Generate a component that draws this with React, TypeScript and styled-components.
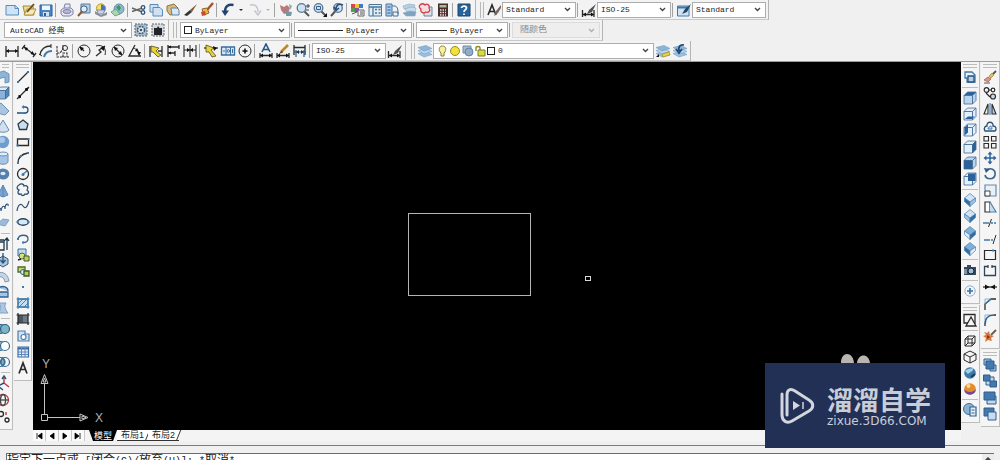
import React from "react";
import type { ReactNode } from "react";
import styled, { createGlobalStyle, css } from "styled-components";

const GlobalStyle = createGlobalStyle`
  *, *::before, *::after { box-sizing: border-box; }
  html, body { margin: 0; padding: 0; background: #f0f0f0; overflow: hidden; }
  body { font-family: "Liberation Mono", "Noto Sans CJK SC", monospace; font-size: 8px; color: #222; }
  button, select { font: inherit; color: inherit; }
`;

/* ---------- palette ---------- */
const ink = "#2b2b2b";
const navy = "#2a5078";
const blue = "#3f78ad";
const sky = "#b9d6ee";
const pale = "#e3effa";

const line = { fill: "none", stroke: ink, strokeWidth: 1.3 };
const thin = { fill: "none", stroke: ink, strokeWidth: 1 };
const navyLine = { fill: "none", stroke: navy, strokeWidth: 1.3 };
const blueLine = { fill: "none", stroke: blue, strokeWidth: 1.3 };

const Cube = ({ top = pale, left = pale, right = pale }: { top?: string; left?: string; right?: string }) => (
  <g stroke="#3d6a94" strokeWidth="0.8" strokeLinejoin="round">
    <path d="M2 5.5 5.5 2H14L10.500 5.500Z" fill={top} />
    <path d="M2 5.500H10.500V14H2Z" fill={left} />
    <path d="M10.500 5.500 14 2V10.500L10.500 14Z" fill={right} />
  </g>
);

const Diamond = ({ a, b, c }: { a: string; b: string; c: string }) => (
  <g stroke="#4a7fae" strokeWidth="0.7" strokeLinejoin="round">
    <path d="M8 1.500 13.500 6 8 10 2.500 6Z" fill={a} />
    <path d="M2.500 6 8 10V14.500L2.500 9.500Z" fill={b} />
    <path d="M13.500 6 8 10V14.500L13.500 9.500Z" fill={c} />
  </g>
);

const Lens = ({ children }: { children?: ReactNode }) => (
  <g>
    <path d="M9.500 9.500 14 14" stroke="#555" strokeWidth="2" />
    <circle cx="6.500" cy="6" r="4.300" fill="#cfe2f2" stroke="#5c7690" strokeWidth="1.300" />
    {children}
  </g>
);

const Layers = () => (
  <g stroke="#6f9cc6" strokeWidth="0.600">
    <path d="M1 10.500 9 8.500 15 11.500 7 14Z" fill="#9cc0df" />
    <path d="M1 7.500 9 5.500 15 8.500 7 11Z" fill="#bcd6ec" />
    <path d="M1 4.500 9 2.500 15 5.500 7 8Z" fill="#8fb4d6" />
  </g>
);

const glyphs: Record<string, ReactNode> = {
  new: <path d="M2 3.500H11L14.500 6.500V13H2Z M11 3.500V6.500H14.500" fill="#cfe3f6" stroke="#5a8cbd" />,
  open: (
    <g>
      <path d="M2 4H12L13 13H4Z" fill="#e8dc9a" stroke="#a9873c" />
      <path d="M3 13 6 7H15L12 13Z" fill="#f3e9b5" stroke="#b08e3f" />
      <path d="M6 10 13 2" stroke="#6b4c22" strokeWidth="1.800" />
    </g>
  ),
  save: (
    <g>
      <path d="M2 3H14V14H2Z" fill="#4a86c6" stroke="#2d5f98" />
      <path d="M4 3.500H12V8H4Z" fill="#eef5fc" />
      <path d="M5 10H11V14H5Z" fill="#cfe0ee" />
      <path d="M6 11H8V14H6Z" fill="#2d5f98" />
    </g>
  ),
  print: (
    <g fill="#e4e6f4" stroke="#7f81a6">
      <path d="M5 6 6 2H11L11 6" />
      <path d="M2 8 5 6H12L14 8V12L11 14H4L2 12Z" />
      <ellipse cx="8" cy="9.500" rx="4" ry="2" fill="#b5b8d8" />
    </g>
  ),
  preview: (
    <g>
      <path d="M5 2H14V11H5Z" fill="#b7d3ec" stroke="#4b7dac" />
      <circle cx="8" cy="7" r="3.200" fill="#dfeefa" stroke="#456" />
      <path d="M6 9.500 2 14" stroke="#8a5a35" strokeWidth="2" />
    </g>
  ),
  publish: (
    <g>
      <path d="M2 9 8 13 14 10 14 13 8 15 2 12Z" fill="#8e8f9a" />
      <circle cx="8" cy="6.500" r="4.600" fill="#f4e16c" stroke="#b99a24" />
      <path d="M8 2.500A4 4 0 0 1 12 8L8 8Z" fill="#4d6fc0" />
      <path d="M4 8H12L10 12H5Z" fill="#c9d3ee" stroke="#6476a6" strokeWidth="0.700" />
    </g>
  ),
  dwf: (
    <g>
      <circle cx="9" cy="7" r="5" fill="#8fb8cf" stroke="#6d90a5" />
      <path d="M6 5 9 3 11 6 9 9Z" fill="#3c9a5e" />
      <path d="M1 10 6 7 10 12 5 14Z" fill="#a9d5b2" stroke="#5d9770" strokeWidth="0.800" />
    </g>
  ),
  cut: (
    <g>
      <path d="M1 6 10 9.500M1 9.500 10 6.500" stroke="#666" strokeWidth="1.400" />
      <circle cx="12" cy="5.500" r="1.800" {...navyLine} />
      <circle cx="12" cy="10.500" r="1.800" {...navyLine} />
    </g>
  ),
  copy: (
    <g fill="#cfe2f4" stroke="#5a8bb9">
      <path d="M2 2.500H10V10H2Z" />
      <path d="M5 5.500H12L14.500 8V14H5Z" />
    </g>
  ),
  paste: (
    <g>
      <path d="M2 4 9 2 13 6 12 12 5 13 2 9Z" fill="#d8bc7a" stroke="#8d7342" />
      <path d="M6 6H12L14 8V13H7Z" fill="#dbe7f4" stroke="#5b84ae" />
    </g>
  ),
  match: (
    <g>
      <path d="M15 2 8 8 10 10Z" fill="#8a5a3c" />
      <path d="M8 8 10 10 5 14 2 13Z" fill="#333" />
    </g>
  ),
  block: (
    <g>
      <path d="M14 1 8 8" stroke="#a5522a" strokeWidth="2.400" />
      <path d="M3 7 8 6 10 11 5 13Z" fill="#e7b94a" stroke="#93652b" />
      <path d="M2 10 6 9 7 13 3 14Z" fill="#c94c2f" />
    </g>
  ),
  undo: (
    <g>
      <path d="M13.500 3C8 2 5 4.500 5 9.500" fill="none" stroke="#22436f" strokeWidth="2.400" />
      <path d="M1.500 8.500H9L5 14Z" fill="#22436f" />
    </g>
  ),
  redo: <path d="M3 3C9 2 11 5 11 10M7.500 8.500 11 13 14 8.500" fill="none" stroke="#c3c8ce" strokeWidth="1.600" />,
  pan: (
    <g>
      <path d="M2 3 6 5 9 3 12 6 10 11 6 12 3 8Z" fill="#b9787a" />
      <path d="M8 9 14 10 13 14 8 14Z" fill="#6d9ba8" />
      <path d="M11 2 14 4 12 8Z" fill="#80a6b9" />
    </g>
  ),
  zoomRt: (
    <Lens>
      <path d="M11 4H15M13 2V6M11 8H14" stroke="#345" />
    </Lens>
  ),
  zoomWin: (
    <Lens>
      <path d="M4.500 4.500H8.500V7.500H4.500Z" fill="none" stroke="#2f6496" />
      <path d="M11 15H15V11Z" fill="#111" />
    </Lens>
  ),
  zoomPrev: (
    <g>
      <circle cx="9" cy="6" r="4.300" fill="#cfe2f2" stroke="#5c7690" strokeWidth="1.300" />
      <path d="M6 9.500 2 14" stroke="#555" strokeWidth="2" />
      <path d="M14 3C10 1 7 3 7 7M5 5 7 8.500 10 6" fill="none" stroke={navy} strokeWidth="1.600" />
    </g>
  ),
  props: (
    <g>
      <path d="M1 2H5V6H1Z" fill="#d9473d" />
      <path d="M5 2H9V6H5Z" fill="#e9c63a" />
      <path d="M1 6H5V10H1Z" fill="#4f9e50" />
      <path d="M5 6H9V10H5Z" fill="#8f4fae" />
      <path d="M9 2H13V6H9Z" fill="#3e78cf" />
      <path d="M8 8H14V14H8Z" fill="#f5f5f5" stroke="#666" />
      <path d="M2 12 7 10M10 10H13M10 12H13" stroke="#555" />
    </g>
  ),
  center: (
    <g>
      <path d="M2 2.500H14.500V14H2Z" fill="#e1edf6" stroke="#4c7796" />
      <path d="M2 5H14.500M6 5V14M8 7.500H10M11.500 7.500H13.500M8 11H10M11.500 11H13.500" stroke="#4b759a" strokeWidth="1.300" />
    </g>
  ),
  palettes: (
    <g>
      <path d="M2 2H8V14H2Z" fill="#a9cae8" stroke="#4577a3" />
      <path d="M3.500 5H6.500M3.500 8H6.500M3.500 11H6.500" stroke="#2e5c86" />
      <path d="M8 4H11C14 5 14 8 14 12M9 10H14V14H9Z" fill="#e9f2fa" stroke="#4a6f92" />
    </g>
  ),
  sheets: (
    <g stroke="#8aaac4" strokeWidth="0.600">
      <path d="M2 4 8 2 14 3 13 6 3 7Z" fill="#b7cfe1" />
      <path d="M4 7 10 5 15 6 14 10 6 10Z" fill="#c9dbe8" />
      <path d="M2 11 9 9 15 10 14 14 5 14Z" fill="#7fa4c2" />
    </g>
  ),
  markup: (
    <g>
      <path d="M6 5H14V14H6Z" fill="#d8dfe9" stroke="#72839c" />
      <path d="M2 3C4 1 6 2 7 3 9 1 12 3 11 6 13 9 10 11 8 10 5 12 2 10 3 7 1 6 1 4 2 3Z" fill="#f6dede" stroke="#cf3e48" strokeWidth="1.300" />
    </g>
  ),
  calc: (
    <g>
      <path d="M3 1.500H13V14.500H3Z" fill="#4b2c2c" />
      <path d="M4.500 3H11.500V5.500H4.500Z" fill="#9fc08d" />
      <path d="M5 8H11M5 10.500H11M5 13H11" stroke="#e9dcdc" strokeWidth="1.300" strokeDasharray="1.500 1" />
    </g>
  ),
  help: (
    <g>
      <path d="M2 2H14V14H2Z" fill="#27629c" stroke="#174671" />
      <path d="M5.500 6C5.500 3.500 10.500 3.500 10.500 6 10.500 8 8 7.500 8 10M8 11.500V13" fill="none" stroke="#fff" strokeWidth="1.700" />
    </g>
  ),
  textStyle: (
    <g>
      <path d="M2 13 6 3 10 13M3.500 9.500H8.500" {...line} strokeWidth="1.600" />
      <path d="M15 3 10 9 8 14 12 11 15 6Z" fill="#76685e" />
    </g>
  ),
  dimStyle: (
    <g>
      <path d="M1.500 8V15M13 8V15M2 12.500H13" {...line} />
      <path d="M2 12.500 5 10.500V14.500ZM13 12.500 10 10.500V14.500Z" fill="#111" />
      <path d="M15 2 8 8 6 12 11 10Z" fill="#54504d" />
    </g>
  ),
  tableStyle: (
    <g>
      <path d="M1.500 4H13V14H1.500Z" fill="#cfe3f6" stroke="#4278a8" />
      <path d="M1.500 5.500H13" stroke="#4278a8" strokeWidth="2" />
      <path d="M15 2 9 7 6 12 11 10Z" fill="#24486c" />
    </g>
  ),
  gear: (
    <g>
      <path d="M2 2H14V14H2Z" fill="#a9bccb" stroke="#4d6478" strokeDasharray="2 1" />
      <circle cx="8" cy="8" r="3.500" fill="#e5ecf1" stroke="#3e5668" strokeWidth="1.500" strokeDasharray="2 0.800" />
      <circle cx="8" cy="8" r="1.300" fill="#3e5668" />
    </g>
  ),
  workspace: (
    <g>
      <path d="M2 2H14V14H2Z" fill="#d5dade" stroke="#5a6670" strokeDasharray="2 1" />
      <path d="M4 6H7L8 4 9.500 6H12V13H4Z" fill="#202427" />
    </g>
  ),
  dLinear: (
    <g>
      <path d="M2 3V14M14 3V14M2 8H14" {...line} />
      <path d="M2 8 5 6V10ZM14 8 11 6V10Z" fill="#111" />
    </g>
  ),
  dAligned: (
    <g>
      <path d="M4 2 1 6M15 10 12 14M3 4 13.500 12" {...line} />
      <path d="M3 4 7 5 5 8ZM13.500 12 9.500 11 11.500 8Z" fill="#111" />
    </g>
  ),
  dArc: (
    <g>
      <path d="M2 12C3 6 7 3 13 3" {...line} />
      <path d="M6 14C7 10 9 8 14 8" {...blueLine} strokeWidth="2" />
      <path d="M13 1V5M1 11 4 13" {...thin} />
    </g>
  ),
  dOrd: (
    <g>
      <path d="M2 3V14H14M2 10H5L8 6V2M8 14V10H12V14" {...line} strokeWidth="1.100" strokeDasharray="2.500 1" />
      <circle cx="10" cy="5" r="2.500" {...thin} />
    </g>
  ),
  dRadius: (
    <g>
      <circle cx="8" cy="8" r="6" {...thin} />
      <path d="M8 8 4 4" {...line} />
      <path d="M3.500 3.500 8 5 5 8Z" fill="#111" />
    </g>
  ),
  dJog: (
    <g>
      <path d="M3 3C9 1 14 5 12 12" {...thin} />
      <path d="M3 13 8 9 6 7 12 3" {...line} />
      <path d="M12 3 11 8 7 5Z" fill="#111" />
    </g>
  ),
  dDia: (
    <g>
      <circle cx="8" cy="8" r="6" {...thin} />
      <path d="M4 4 12 12" {...line} />
      <path d="M4 4 8 5 5 8ZM12 12 8 11 11 8Z" fill="#111" />
    </g>
  ),
  dAng: (
    <g>
      <path d="M14 13H2L8 2" {...line} />
      <path d="M6 5C10 6 12 9 12 12" {...thin} />
      <path d="M10 5 12 9 8 8ZM12 13 10 9 14 9Z" fill="#111" />
    </g>
  ),
  dQuick: (
    <g>
      <path d="M2 3V14M14 3V14M10 8H14" {...line} />
      <path d="M3 3 11 5 8 8 13 12 10 14 5 9 3 9Z" fill="#e5d338" stroke="#544c18" strokeWidth="0.800" />
    </g>
  ),
  dBase: (
    <g>
      <path d="M3 2V14M3 4H14M14 2V6M3 10H10M10 8V13" {...line} />
      <path d="M3 4 6 2.500V5.500ZM3 10 6 8.500V11.500Z" fill="#111" />
    </g>
  ),
  dCont: (
    <g>
      <path d="M2 2V14M8 2V14M14 2V14M2 7H14" {...line} strokeWidth="1.100" />
      <path d="M8 7 5 5V9ZM8 7 11 5V9Z" fill="#111" />
    </g>
  ),
  dSpace: (
    <g>
      <path d="M1 5H15" {...line} />
      <path d="M3 2 11 5 8 7 13 13 9 14 6 9 3 9Z" fill="#e5d338" stroke="#544c18" strokeWidth="0.800" />
      <path d="M10 3 14 5 11 8Z" fill="#111" />
    </g>
  ),
  dTol: (
    <g>
      <path d="M1.500 4H14.500V12H1.500Z" fill="#dcebf8" stroke="#396f9f" strokeWidth="1.300" />
      <path d="M6 4V12M10.500 4V12M12.500 6V10M3 8H5" stroke="#396f9f" />
      <circle cx="8.300" cy="8" r="1.300" fill="none" stroke="#396f9f" />
    </g>
  ),
  dCenter: (
    <g>
      <circle cx="8" cy="8" r="6" {...thin} />
      <path d="M8 5.500V10.500M5.500 8H10.500" stroke="#111" strokeWidth="1.600" />
    </g>
  ),
  dEdit: (
    <g>
      <path d="M4 9 8 1 12 9M5.500 6.500H10.500" fill="none" stroke="#24588a" strokeWidth="1.600" />
      <path d="M2 10V15M14 10V15M2 12.500H14" {...line} />
      <path d="M2 12.500 5 10.500V14.500ZM14 12.500 11 10.500V14.500Z" fill="#111" />
    </g>
  ),
  dText: (
    <g>
      <path d="M13 2 6 9" stroke="#c1862c" strokeWidth="2.600" />
      <path d="M6.500 7.500 4 11 8 9.500Z" fill="#6b3b20" />
      <path d="M2 10V15M14 10V15M2 12.500H14" {...line} />
      <path d="M2 12.500 5 10.500V14.500ZM14 12.500 11 10.500V14.500Z" fill="#111" />
    </g>
  ),
  dUpdate: (
    <g>
      <path d="M2 2V12M13 2V12M2 4.500H13" {...line} />
      <path d="M2 9H14M4 7V14M12 7V14" fill="none" stroke="#2e5a84" strokeWidth="1.200" />
      <path d="M4 9 7 7V11ZM12 9 9 7V11Z" fill="#1d3b59" />
    </g>
  ),
  layers: <Layers />,
  layerCur: (
    <g>
      <Layers />
      <path d="M7 11 14 9 15 12 8 14Z" fill="#e6d341" stroke="#9a8c22" strokeWidth="0.700" />
      <path d="M1 14 4 11V14Z" fill="#111" />
    </g>
  ),
  layerPrev: (
    <g>
      <Layers />
      <path d="M12 2C8 1 6 4 7 8M4 6 7 10 10 6" fill="none" stroke="#1d4672" strokeWidth="1.700" />
    </g>
  ),
  /* solids */
  polysolid: <path d="M2 4 9 2 14 5V13L10 14V8L3 10Z" fill="#8fb4d8" stroke="#6b93ba" />,
  box: <Cube top="#dcebf8" left="#8bb2d8" right="#5585b5" />,
  wedge: <path d="M2 5 6 2 14 10 10 14 2 12Z" fill="#a8c6e2" stroke="#7192b0" />,
  cone: <path d="M8 2 14 12C12 15 4 15 2 12Z" fill="#cfdff0" stroke="#6d8cab" />,
  sphere: (
    <g>
      <circle cx="8" cy="8" r="6.200" fill="#6f9dd0" />
      <circle cx="7" cy="6" r="3" fill="#a9c8ea" />
    </g>
  ),
  cylinder: (
    <g stroke="#6c90b4">
      <path d="M3 4V12C4 15 12 15 13 12V4" fill="#a6c5e4" />
      <ellipse cx="8" cy="4" rx="5" ry="2" fill="#e0edf9" />
    </g>
  ),
  torus: (
    <g>
      <ellipse cx="8" cy="8" rx="6.300" ry="5.500" fill="#5580ae" />
      <ellipse cx="8" cy="7.500" rx="2.600" ry="1.700" fill="#dce9f5" />
    </g>
  ),
  pyramid: <path d="M8 2 13 12 8 14 3 12Z M8 2V14" fill="#7ba4d2" stroke="#5c86b5" />,
  helix: <path d="M2 13C3 8 6 8 6 12 7 6 10 6 10 10 10 4 14 4 13 7" {...navyLine} strokeWidth="1.100" />,
  planar: <path d="M2 9 8 4 14 5 10 11Z" fill="#9bbbdc" stroke="#7fa0c3" />,
  extrude: <path d="M2 6H9V14H2M12 14V3M9 5 12 2 14 5M4 4H9" {...line} stroke="#20344a" />,
  presspull: (
    <g>
      <path d="M3 7 8 4 13 7V12L8 15 3 12Z" fill="#aac4e0" stroke="#37597c" />
      <path d="M8 1V11M5.500 8 8 11 10.500 8" {...navyLine} />
    </g>
  ),
  sweep: <path d="M2 5C8 3 13 6 14 13L10 14C9 9 6 8 2 9Z" fill="#c5d5e8" stroke="#8099b5" />,
  revolve: <path d="M3 4C8 1 13 3 13 7M2 8H13V13H5Z" fill="#a7c6e4" stroke="#336291" strokeWidth="1.300" />,
  loft: <path d="M4 3H11C9 6 10 9 13 13H3C7 10 6 7 4 3Z" fill="#adc7e3" stroke="#7f9fc1" />,
  union: (
    <g fill="#7fb3c9" stroke="#2c6080" strokeWidth="1.200">
      <circle cx="5.500" cy="8" r="4.500" />
      <circle cx="10" cy="8" r="4.500" />
    </g>
  ),
  subtract: (
    <g stroke="#3b6d93" strokeWidth="1.200">
      <circle cx="5.500" cy="8" r="4.500" fill="#8fb6d3" />
      <circle cx="10" cy="8" r="4.500" fill="#fff" />
    </g>
  ),
  intersect: (
    <g fill="none" stroke="#3b6d93" strokeWidth="1.200">
      <path d="M7.700 4C5.500 6.500 5.500 9.500 7.700 12 10 9.500 10 6.500 7.700 4Z" fill="#7fb0cc" />
      <circle cx="5.500" cy="8" r="4.500" />
      <circle cx="10" cy="8" r="4.500" />
    </g>
  ),
  move3d: (
    <g>
      <path d="M9 2V8L14 12" fill="none" stroke="#b5393c" strokeWidth="1.400" />
      <path d="M9 8 3 11 8 15M7 4 9 1 11 4" fill="none" stroke="#2d4f77" strokeWidth="1.400" />
    </g>
  ),
  rotate3d: (
    <g fill="none" strokeWidth="1.300">
      <circle cx="8" cy="8" r="5.500" stroke="#b5393c" />
      <ellipse cx="8" cy="8" rx="2.500" ry="5.500" stroke="#444" />
      <path d="M2.500 8H13.500" stroke="#444" />
    </g>
  ),
  align3d: (
    <g {...line}>
      <circle cx="6" cy="5" r="2.500" />
      <circle cx="12" cy="11" r="2" />
      <path d="M11 3V6M3 11V14" stroke="#a33" />
    </g>
  ),
  /* draw */
  line: (
    <g>
      <path d="M3 13 13 3" {...line} />
      <path d="M2 12H4V14H2ZM12 2H14V4H12Z" fill={blue} />
    </g>
  ),
  xline: (
    <g>
      <path d="M2 14 14 2" {...line} />
      <path d="M4 10 6 12 4 13ZM10 4 12 6 13 3Z" fill="#111" stroke="#111" />
    </g>
  ),
  pline: (
    <g>
      <path d="M3 12H10C14 12 14 6 10 6H8" {...navyLine} />
      <path d="M2 11H4V13H2ZM9 11H11V13H9ZM9 4 6.500 6 9 8Z" fill={blue} />
    </g>
  ),
  polygon: <path d="M8 3 13 7 11.500 12.500H4.500L3 7Z" fill="#cbdff0" stroke="#303a44" strokeWidth="1.300" />,
  rect: (
    <g>
      <path d="M2.500 5H13.500V11.500H2.500Z" {...line} />
      <path d="M1.500 10.500H3.500V12.500H1.500ZM12.500 4H14.500V6H12.500Z" fill={blue} />
    </g>
  ),
  arc: (
    <g>
      <path d="M3 13C3 7 7 4 13 3" {...line} />
      <path d="M2 12H4V14H2ZM5 5H7V7H5ZM12 2H14V4H12Z" fill={blue} />
    </g>
  ),
  circle: (
    <g>
      <circle cx="8" cy="8" r="5.500" {...line} />
      <path d="M8 8 12 5" {...blueLine} />
      <circle cx="8" cy="8.500" r="1.500" fill={blue} />
    </g>
  ),
  cloud: <path d="M4 3C6 1 9 2 9 4 12 3 14 5 12 8 15 10 13 13 10 12 9 14 6 14 6 12 3 13 2 10 4 8 1 7 2 4 4 3Z" {...navyLine} />,
  spline: <path d="M2 13C3 6 6 5 8 8S12 10 14 3" {...line} stroke="#33506e" strokeWidth="1.200" />,
  ellipse: (
    <g>
      <ellipse cx="8" cy="8" rx="5.500" ry="3.200" fill="#d7e8f5" stroke="#27425c" strokeWidth="1.400" />
      <path d="M1.500 7H3.500V9H1.500ZM12.500 7H14.500V9H12.500Z" fill={blue} />
    </g>
  ),
  earc: (
    <g>
      <path d="M3 8C4 3 13 3 13 8 13 11 10 11.500 8 11.500" fill="none" stroke="#3a5f85" strokeWidth="1.300" />
      <path d="M2 7H4V9H2ZM7 10.500H9V12.500H7Z" fill={blue} />
    </g>
  ),
  insert: (
    <g>
      <path d="M3 2H11V9H3Z" fill="#c2dbef" stroke="#3b6f9c" />
      <circle cx="7" cy="9" r="3" fill="#d2e089" stroke="#54702c" />
      <path d="M9 9H14V14H9Z" fill="#b9cf6c" stroke="#43591f" />
      <path d="M3 13 6 12" stroke="#222" strokeWidth="1.500" />
    </g>
  ),
  mkblock: (
    <g>
      <path d="M3 4H10V9H3Z" fill="#c5d87e" stroke="#4e6a2a" strokeWidth="1.300" />
      <circle cx="8" cy="9" r="2.500" fill="#dce8f4" stroke="#366" />
      <path d="M9 8H14V13H9Z" fill="#b5cc62" stroke="#43591f" strokeWidth="1.300" />
    </g>
  ),
  point: <path d="M7 7H9V9H7Z" fill={blue} />,
  hatch: (
    <g>
      <path d="M3 4H13V12H3Z" fill="#c7dff1" stroke="#3e7ba8" strokeWidth="1.300" />
      <path d="M3 9 8 4M4 12 12 4M9 12 13 8M1.500 4H14.500M1.500 12H14.500M3 2V14M13 2V14" stroke="#3e7ba8" strokeWidth="0.900" />
    </g>
  ),
  gradient: (
    <g>
      <path d="M3 4H13V12H3Z" fill="#4c545c" />
      <path d="M8 4H13V12H8Z" fill="#6e7a85" />
      <path d="M1.500 4H14.500M1.500 12H14.500M3 2V14M13 2V14" stroke="#20262c" strokeWidth="1.200" />
    </g>
  ),
  region: (
    <g>
      <path d="M3 3H10V6H14V13H3Z" fill="#cfe1f2" stroke="#4c7eac" strokeWidth="1.200" />
      <circle cx="8.500" cy="9" r="2.500" fill="#fff" stroke="#4c7eac" strokeWidth="1.200" />
    </g>
  ),
  table: (
    <g>
      <path d="M3 3H13.500V13H3Z" fill="#e5effa" stroke="#3d69a4" strokeWidth="1.200" />
      <path d="M3 4.500H13.500" stroke="#3d69a4" strokeWidth="2" />
      <path d="M3 8H13.500M3 10.500H13.500M6.500 4V13M10 4V13" stroke="#5c86bd" />
    </g>
  ),
  mtext: <path d="M4 13.500 8 3 12 13.500M5.500 9.500H10.500" {...line} strokeWidth="1.700" />,
  /* views */
  named: (
    <g>
      <path d="M3 3H10L13 6V13H5V9H3Z" fill="#e9f2fa" stroke={blue} strokeWidth="1.300" />
      <path d="M6 7H12V13H6Z" fill="#b5d0e8" stroke={navy} strokeWidth="1.300" />
    </g>
  ),
  vTop: <Cube top="#2b6299" left={sky} right={sky} />,
  vBottom: (
    <g>
      <Cube top={pale} left={pale} right={pale} />
      <path d="M3 13 6 10.500H13L10 13Z" fill="#2b6299" />
    </g>
  ),
  vLeft: (
    <g>
      <Cube top={pale} left={pale} right={pale} />
      <path d="M2.500 5.500 6 2.500V10.500L2.500 13.500Z" fill="#2b6299" />
    </g>
  ),
  vRight: <Cube top={pale} left={pale} right="#2b6299" />,
  vFront: <Cube top={sky} left="#2b6299" right={sky} />,
  vBack: (
    <g>
      <Cube top={pale} left={pale} right={pale} />
      <path d="M6 2.500H13.500V10H6Z" fill="#2b6299" />
    </g>
  ),
  sw: <Diamond a="#d2e4f4" b="#2f6ca5" c="#9fc2e0" />,
  se: <Diamond a="#d2e4f4" b="#9fc2e0" c="#2f6ca5" />,
  ne: <Diamond a="#7fb0d8" b="#e4eef8" c="#2f6ca5" />,
  nw: <Diamond a="#7fb0d8" b="#2f6ca5" c="#e4eef8" />,
  camera: (
    <g>
      <path d="M2 5H5V3H9V5H14V13H2Z" fill="#37495a" />
      <circle cx="9" cy="9" r="3" fill="#9fc0dd" stroke="#1a242e" />
      <path d="M2 7H5V12H2Z" fill="#7e95a9" />
    </g>
  ),
  orbit: (
    <g>
      <circle cx="8" cy="8" r="5.200" fill="#eff5fa" stroke="#9bb2c6" />
      <path d="M8 5V11M5 8H11" stroke="#366fa5" strokeWidth="1.600" />
    </g>
  ),
  vs2d: (
    <g {...line}>
      <path d="M2 2.500H13V11H2Z" />
      <path d="M4 14 9 5 14 14Z" fill="#f4f4f4" />
    </g>
  ),
  vsWire: <path d="M3 6 6 3H13V10L10 13H3ZM3 6H10V13M10 6 13 3M6 3V10H13M6 10 3 13" {...thin} />,
  vsHidden: <path d="M8 2 14 5V11L8 14 2 11V5ZM2 5 8 8 14 5M8 8V14" {...thin} />,
  vsReal: (
    <g>
      <circle cx="8" cy="8" r="5.800" fill="#3d7aa8" />
      <path d="M3 6C6 3 9 4 11 3 12 6 8 7 6 9Z" fill="#a6d0e4" />
      <path d="M9 12 13 9" stroke="#1c3e5c" strokeWidth="2" />
    </g>
  ),
  vsConcept: (
    <g>
      <circle cx="8" cy="8" r="5.800" fill="#e38b2d" />
      <path d="M2.200 8C4 12 12 12 13.800 8 14 15.500 2 15.500 2.200 8Z" fill="#6a4aa5" />
      <circle cx="6.500" cy="5" r="2" fill="#ffd684" />
    </g>
  ),
  vsManage: (
    <g>
      <circle cx="7" cy="7" r="5.500" fill="#8ab3d3" stroke="#3f6f98" />
      <path d="M8 5H14V14H8Z" fill="#e4eff8" stroke="#2e628f" strokeWidth="1.200" />
      <path d="M9.500 8H12.500M9.500 11H12.500" stroke="#2e628f" />
    </g>
  ),
  /* modify */
  erase: (
    <g>
      <path d="M14 2 9 7" stroke="#555" strokeWidth="1.800" />
      <path d="M10 4 7 7 9 9 12 6Z" fill="#e0c24d" stroke="#8f7d2e" strokeWidth="0.600" />
      <path d="M6 8 9 10 6 13 2 11Z" fill="#dd958b" stroke="#9b5048" strokeWidth="0.700" />
      <path d="M2 14H8" stroke="#555" />
    </g>
  ),
  mcopy: (
    <g {...line} strokeWidth="1.200">
      <circle cx="4.500" cy="5" r="2.300" />
      <circle cx="11" cy="5" r="1.800" />
      <circle cx="11" cy="11.500" r="2.500" fill="#c5daed" />
      <path d="M4 8 8 12M7 5H9" />
    </g>
  ),
  mirror: (
    <g {...line} strokeWidth="1.100">
      <path d="M6 3V13H2Z" />
      <path d="M10 3V13H14Z" fill="#b3cfe8" />
      <path d="M8 2V14" stroke={blue} />
    </g>
  ),
  offset: (
    <g>
      <path d="M3 13C1 9 4 8 5 8 4 3 12 3 11 8 14 8 15 11 13 13Z" {...navyLine} />
      <path d="M6 11C6 9 7 9 8 9 8 7 10 8 10 11Z" fill="#cfe1f2" stroke={blue} />
    </g>
  ),
  array: <path d="M2 2.500H6.500V7H2ZM9.500 2.500H14V7H9.500ZM2 9.500H6.500V14H2ZM9.500 9.500H14V14H9.500Z" {...line} strokeWidth="1.100" />,
  move: (
    <g>
      <path d="M8 3V13M3 8H13" stroke="#2e6599" strokeWidth="1.500" />
      <path d="M8 1.500 10.500 4.500H5.500ZM8 14.500 10.500 11.500H5.500ZM1.500 8 4.500 5.500V10.500ZM14.500 8 11.500 5.500V10.500Z" fill="#2e6599" />
    </g>
  ),
  rotate: (
    <g>
      <path d="M5 4C9 1 14 4 13 9 12 14 4 14 3 9" fill="none" stroke="#3f658b" strokeWidth="1.600" />
      <path d="M2 2 8 3 4 7Z" fill="#35587c" />
    </g>
  ),
  scale: (
    <g>
      <path d="M3 3H14V14H3Z" fill="#e8f1f8" stroke="#648cae" strokeWidth="1.200" />
      <path d="M3 9H8V14H3Z" fill="#fff" stroke="#444" />
    </g>
  ),
  stretch: (
    <g>
      <path d="M3 3H8V13H3Z" fill="#fff" stroke="#333" strokeWidth="1.200" />
      <path d="M8 3 14 13H8" fill="#c8dcee" stroke="#5580a5" strokeWidth="1.200" />
    </g>
  ),
  trim: (
    <g>
      <path d="M1 8H7M9 8H11M12 8H14" {...blueLine} />
      <path d="M9.500 4 6.500 12" {...line} strokeWidth="1" />
    </g>
  ),
  extend: (
    <g>
      <path d="M2 9H8M9 9H11" {...blueLine} />
      <path d="M14 4 11 13" {...line} strokeWidth="1" />
    </g>
  ),
  breakPt: (
    <g>
      <path d="M2.500 3.500H13.500V12.500H2.500Z" fill="#f4f6f8" stroke={ink} strokeWidth="1.200" />
      <path d="M10 2.500H12V4.500H10Z" fill={blue} />
    </g>
  ),
  brk: <path d="M6 3.500H2.500V12.500H13.500V3.500H10M6 2V5M10 2V5" {...line} stroke="#2e455c" />,
  join: (
    <g>
      <path d="M1 8H15" {...line} />
      <path d="M3 5.500 7.500 8 3 10.500ZM13 5.500 8.500 8 13 10.500Z" fill="#111" />
    </g>
  ),
  chamfer: (
    <g>
      <path d="M3 14V8L9 3H14" {...line} />
      <path d="M3 8V3H9" stroke="#8ab0d0" fill="none" />
      <path d="M3 8 9 3" {...blueLine} />
    </g>
  ),
  fillet: (
    <g>
      <path d="M3 8V3H8" stroke="#8ab0d0" fill="none" />
      <path d="M3 14V12M12 3H14" {...line} />
      <path d="M3 12C3 6 7 3 12 3" fill="none" stroke="#2c5f94" strokeWidth="1.700" />
    </g>
  ),
  explode: (
    <g>
      <path d="M14 2 9 7" stroke="#6b5a50" strokeWidth="1.800" />
      <path d="M2 4 5 5 7 3 8 7 12 8 9 10 10 13 6 12 3 14 4 10 1 8 4 7Z" fill="#d8763f" />
      <path d="M5 7 8 9 5 11Z" fill="#8d2f1c" />
    </g>
  ),
  front: (
    <g stroke="#2f5f8f">
      <path d="M2 2H9V8H2ZM8 8H14V14H8Z" fill="#a9c6e1" />
      <path d="M4 4H12V12H4Z" fill="#4379ae" />
    </g>
  ),
  back: (
    <g stroke="#2f5f8f">
      <path d="M4 4H12V12H4Z" fill="#c3d8eb" />
      <path d="M1.500 2H8V8H1.500ZM8 8H14.500V14H8Z" fill="#4379ae" />
    </g>
  ),
  above: (
    <g stroke="#2f5f8f">
      <path d="M5 6H14V14H5Z" fill="#c3d8eb" />
      <path d="M2 2H13V10H2Z" fill="#4379ae" />
    </g>
  ),
  under: (
    <g stroke="#2f5f8f">
      <path d="M2 2H12V10H2Z" fill="#4379ae" />
      <path d="M6 6H14V14H6Z" fill="#c9dcee" />
    </g>
  ),
};

/* ---------- toolbar parts ---------- */
const ToolbarArea = styled.header`
  display: flex;
  flex-direction: column;
  border-bottom: 1px solid #9c9c9c;
`;

const ToolbarRow = styled.div<{ $height: number }>`
  display: flex;
  height: ${(p) => p.$height}px;
`;

const Toolbar = styled.div<{ $lead: number; $tail: number }>`
  display: flex;
  align-items: center;
  padding: 0 ${(p) => p.$tail}px 0 ${(p) => p.$lead}px;
  background: #f3f3f3;
  border-right: 1px solid #b4b4b4;
  border-bottom: 1px solid #c9c9c9;
`;

const Grip = styled.span<{ $after?: number }>`
  flex: none;
  width: 4px;
  height: 16px;
  margin: 0 ${(p) => p.$after ?? 1}px 0 2px;
  border: solid #b8b8b8;
  border-width: 0 1px;
`;

const Divider = styled.span`
  flex: none;
  width: 1px;
  height: 14px;
  margin: 0 2px 0 1px;
  background: #a2a2a2;
`;

const ToolButton = styled.button`
  display: flex;
  align-items: center;
  justify-content: center;
  flex: none;
  width: 17px;
  height: 16px;
  padding: 0;
  border: 0;
  background: transparent;

  svg {
    flex: none;
    width: 16px;
    height: 16px;
  }
`;

const MenuButton = styled(ToolButton)`
  width: 10px;

  svg {
    width: 4px;
    height: 4px;
  }
`;

const SelectFrame = styled.label<{ $width: number; $disabled?: boolean }>`
  display: flex;
  align-items: center;
  flex: none;
  width: ${(p) => p.$width}px;
  height: 16px;
  padding: 0 4px 0 3px;
  border: 1px solid #adadad;
  background: #fff;
  ${(p) =>
    p.$disabled &&
    css`
      border-color: #dcdcdc;
      background: #eeeeee;
      color: #8a8a8a;
      font-size: 9px;
    `}

  select {
    flex: 1;
    min-width: 0;
    height: 14px;
    margin: 0 -8px 0 0;
    padding: 0 8px 0 0;
    border: 0;
    background: transparent;
    appearance: none;
    opacity: 1;
  }

  svg {
    flex: none;
    pointer-events: none;
  }
`;

const Swatch = styled.span`
  flex: none;
  width: 8px;
  height: 8px;
  margin-right: 3px;
  border: 1px solid #222;
  background: #fff;
`;

const LineSample = styled.span<{ $width: number }>`
  flex: none;
  width: ${(p) => p.$width}px;
  height: 1px;
  margin-right: 3px;
  background: #222;
`;

const Indent = styled.span<{ $width: number }>`
  flex: none;
  width: ${(p) => p.$width}px;
`;

const Glyph = ({ name }: { name: string }) => (
  <svg viewBox="0 0 16 16" aria-hidden="true">
    {glyphs[name]}
  </svg>
);

const Tool = ({ name }: { name: string }) => (
  <ToolButton type="button" aria-label={name}>
    <Glyph name={name} />
  </ToolButton>
);

const More = ({ color, label }: { color: string; label: string }) => (
  <MenuButton type="button" aria-label={label}>
    <svg viewBox="0 0 4 4">
      <path d="M0 1H4L2 3Z" fill={color} />
    </svg>
  </MenuButton>
);

const Tools = ({ groups }: { groups: string[] }) => (
  <>
    {groups.map((group, i) => (
      <React.Fragment key={group}>
        {i > 0 && <Divider />}
        {group.split(" ").map((name) => (
          <Tool key={name} name={name} />
        ))}
      </React.Fragment>
    ))}
  </>
);

interface ComboProps {
  label: string;
  value: string;
  width: number;
  disabled?: boolean;
  children?: ReactNode;
}

const Combo = ({ label, value, width, disabled, children }: ComboProps) => (
  <SelectFrame $width={width} $disabled={disabled}>
    {children}
    <select aria-label={label} disabled={disabled} defaultValue={value}>
      <option>{value}</option>
    </select>
    <svg width="7" height="5" viewBox="0 0 7 5">
      <path d="M1 1 3.500 3.500 6 1" fill="none" stroke={disabled ? "#b0b0b0" : "#444"} strokeWidth="1.400" />
    </svg>
  </SelectFrame>
);

/* ---------- side palettes ---------- */
const Workspace = styled.main`
  display: flex;
  flex: 1;
  min-height: 0;
`;

const PaletteColumn = styled.div<{ $width: number; $gap: number }>`
  display: flex;
  flex-direction: column;
  flex: none;
  gap: 1px;
  width: ${(p) => p.$width}px;
  margin-right: ${(p) => p.$gap}px;
  margin-bottom: -16px;
`;

const Palette = styled.div<{ $clipped?: boolean }>`
  display: flex;
  flex-direction: column;
  align-items: ${(p) => (p.$clipped ? "flex-end" : "center")};
  overflow: hidden;
  padding: 2px ${(p) => (p.$clipped ? 1 : 0)}px 4px 0;
  background: #f5f5f5;
  border: solid #bdbdbd;
  border-width: 0 1px 1px 0;
`;

const PaletteGrip = styled.span`
  flex: none;
  align-self: stretch;
  height: 4px;
  margin: 0 2px 1px;
  border: solid #bcbcbc;
  border-width: 1px 0;
`;

const PaletteGroup = styled.div<{ $height?: number }>`
  display: flex;
  flex-direction: column;
  justify-content: space-between;
  flex: none;
  height: ${(p) => (p.$height ? `${p.$height}px` : "auto")};
`;

const PaletteRule = styled.span`
  flex: none;
  align-self: stretch;
  height: 1px;
  margin: 2px 1px;
  background: #bdbdbd;
`;

interface Group {
  tools: string;
  height?: number;
}

const ToolPalette = ({ groups, clipped }: { groups: Group[]; clipped?: boolean }) => (
  <Palette $clipped={clipped}>
    <PaletteGrip />
    {groups.map((group, i) => (
      <React.Fragment key={group.tools}>
        {i > 0 && <PaletteRule />}
        <PaletteGroup $height={group.height}>
          {group.tools.split(" ").map((name) => (
            <Tool key={name} name={name} />
          ))}
        </PaletteGroup>
      </React.Fragment>
    ))}
  </Palette>
);

/* ---------- drawing area ---------- */
const DrawingPane = styled.section`
  display: flex;
  flex-direction: column;
  flex: 1;
  min-width: 0;
`;

const Canvas = styled.div`
  position: relative;
  flex: 1;
  min-height: 0;
  overflow: hidden;
  background: #000;

  > svg {
    display: block;
  }
`;

const Ucs = styled.svg`
  position: absolute;
  left: 0;
  bottom: 0;
  font-family: "Liberation Sans", sans-serif;
  font-size: 12px;
`;

const SheetBar = styled.nav`
  display: flex;
  height: 11px;
  background: #f4f4f4;
  font-size: 9px;
`;

const SheetNav = styled.button`
  display: flex;
  align-items: center;
  justify-content: center;
  width: 13px;
  padding: 0;
  border: 0;
  border-right: 1px solid #c8c8c8;
  background: #fafafa;
`;

const SheetTab = styled.button<{ $active?: boolean }>`
  position: relative;
  height: 11px;
  padding: 0 4px;
  border: 0;
  border-bottom: 1px solid #333;
  background: #fff;
  line-height: 10px;
  font-family: "Liberation Sans", "Noto Sans CJK SC", sans-serif;

  &::after {
    content: "";
    position: absolute;
    top: 0;
    right: 0;
    width: 1px;
    height: 11px;
    background: #333;
    transform: skewX(-22deg);
  }

  ${(p) =>
    p.$active &&
    css`
      margin-left: 4px;
      padding: 0 5px;
      border: 0;
      background: #000;
      color: #fff;
      clip-path: polygon(0 0, 100% 0, calc(100% - 4px) 100%, 4px 100%);
    `}
`;

/* ---------- command line ---------- */
const CommandPanel = styled.footer`
  display: flex;
  flex: none;
  height: 15px;
  margin-top: 4px;
  padding: 7px 6px 0;
  border-top: 1px solid #7d7d7d;
  background: #f0f0f0;
`;

const CommandHistory = styled.output`
  flex: 1;
  min-width: 0;
  height: 16px;
  border: solid #6e6e6e;
  border-width: 1px 0 0 1px;
  background: #fff;
  font-size: 10px;
  line-height: 14px;
  white-space: pre;
`;

const Han = styled.span`
  font-size: 12px;
`;

const ScrollUp = styled.button`
  width: 12px;
  height: 12px;
  padding: 0;
  border: 0;
  border-top: 1px solid #6e6e6e;
  background: #ececec;
`;

/* ---------- watermark ---------- */
const Badge = styled.aside`
  position: absolute;
  right: 55px;
  bottom: 12px;
  display: flex;
  align-items: center;
  gap: 12px;
  width: 180px;
  height: 85px;
  padding-left: 14px;
  background: #233056;
  color: #c9cdd8;
`;

const Ears = styled.svg`
  position: absolute;
  left: 76px;
  top: -9px;
`;

const BadgeText = styled.div`
  display: flex;
  flex-direction: column;
`;

const BadgeTitle = styled.strong`
  font-family: "Noto Sans CJK SC", sans-serif;
  font-size: 26px;
  font-weight: 700;
  line-height: 30px;
`;

const BadgeLink = styled.a`
  color: inherit;
  font-family: "DejaVu Sans", sans-serif;
  font-size: 12px;
  line-height: 14px;
  text-decoration: none;
`;

const Shell = styled.div`
  position: relative;
  display: flex;
  flex-direction: column;
  height: 100vh;
  overflow: hidden;
  background: #f0f0f0;
`;

const navPaths = ["M2 1V7M7 1 3 4 7 7Z", "M6 1 2 4 6 7Z", "M2 1 6 4 2 7Z", "M6 1V7M1 1 5 4 1 7Z"];
const navNames = ["首页", "上一页", "下一页", "末页"];

export default function App() {
  return (
    <Shell>
      <GlobalStyle />
      <ToolbarArea>
        <ToolbarRow $height={20}>
          <Toolbar $lead={3} $tail={3}>
            <Tools groups={["new open save", "print preview publish dwf", "cut copy paste match block", "undo"]} />
            <More color="#1d2f57" label="undo list" />
            <Tool name="redo" />
            <More color="#b5b5b5" label="redo list" />
            <Divider />
            <Tools groups={["pan zoomRt zoomWin zoomPrev", "props center palettes sheets markup calc", "help"]} />
          </Toolbar>
          <Toolbar $lead={2} $tail={2}>
            <Grip />
            <Tool name="textStyle" />
            <Combo label="文字样式" value="Standard" width={74} />
            <Divider />
            <Tool name="dimStyle" />
            <Combo label="标注样式" value="ISO-25" width={74} />
            <Divider />
            <Tool name="tableStyle" />
            <Combo label="表格样式" value="Standard" width={74} />
          </Toolbar>
        </ToolbarRow>
        <ToolbarRow $height={21}>
          <Toolbar $lead={4} $tail={2}>
            <Combo label="工作空间" value="AutoCAD 经典" width={128}>
              <Indent $width={2} />
            </Combo>
            <Tool name="gear" />
            <Tool name="workspace" />
          </Toolbar>
          <Toolbar $lead={2} $tail={2}>
            <Grip $after={3} />
            <Combo label="颜色" value="ByLayer" width={110}>
              <Swatch />
            </Combo>
            <Divider />
            <Combo label="线型" value="ByLayer" width={118}>
              <LineSample $width={45} />
            </Combo>
            <Divider />
            <Combo label="线宽" value="ByLayer" width={92}>
              <LineSample $width={27} />
            </Combo>
            <Divider />
            <Combo label="打印样式" value="随颜色" width={88} disabled>
              <Indent $width={4} />
            </Combo>
          </Toolbar>
        </ToolbarRow>
        <ToolbarRow $height={20}>
          <Toolbar $lead={3} $tail={2}>
            <Tools
              groups={[
                "dLinear dAligned dArc dOrd",
                "dRadius dJog dDia dAng",
                "dQuick dBase dCont",
                "dSpace dTol dCenter",
                "dEdit dText dUpdate",
              ]}
            />
            <Divider />
            <Combo label="当前标注样式" value="ISO-25" width={74} />
            <Tool name="dimStyle" />
          </Toolbar>
          <Toolbar $lead={3} $tail={2}>
            <Grip />
            <Tool name="layers" />
            <Combo label="图层" value="0" width={221}>
              <Indent $width={1} />
              <svg width="49" height="14" viewBox="0 0 49 14" aria-hidden="true">
                <path d="M3 9C0 6 1 2 4.500 2S9 6 6 9V12H3Z" fill="#f6eea0" stroke="#8b7d2a" />
                <circle cx="17" cy="7" r="4.500" fill="#f0e23a" stroke="#9b8c1e" />
                <path d="M25 2H33V9H25Z" fill="#a9bccb" stroke="#7489a0" />
                <circle cx="31" cy="8" r="4" fill="#90acc8" stroke="#6484a6" />
                <path d="M38 7V4C38 2 42 2 42 4V7" fill="none" stroke="#8c8a25" strokeWidth="1.400" />
                <path d="M40 6H47V12H40Z" fill="#d8da48" stroke="#7c7c20" />
              </svg>
              <Swatch />
            </Combo>
            <Tool name="layerCur" />
            <Tool name="layerPrev" />
          </Toolbar>
        </ToolbarRow>
      </ToolbarArea>

      <Workspace>
        <PaletteColumn $width={13} $gap={1}>
          <ToolPalette
            clipped
            groups={[
              { tools: "polysolid box wedge cone sphere cylinder torus pyramid helix planar", height: 162 },
              { tools: "extrude presspull sweep revolve loft", height: 80 },
              { tools: "union subtract intersect", height: 49 },
              { tools: "move3d rotate3d align3d", height: 50 },
            ]}
          />
        </PaletteColumn>
        <PaletteColumn $width={18} $gap={1}>
          <ToolPalette
            groups={[
              {
                tools:
                  "line xline pline polygon rect arc circle cloud spline ellipse earc insert mkblock point hatch gradient region table mtext",
                height: 307,
              },
            ]}
          />
        </PaletteColumn>

        <DrawingPane>
          <Canvas>
            <svg width="100%" height="100%" aria-label="模型空间">
              <g fill="none" stroke="#b4b4b4" strokeWidth="1">
                <rect x="375.500" y="151.500" width="122" height="82" />
                <rect x="552.500" y="214.500" width="5" height="4" stroke="#d8d8d8" />
              </g>
            </svg>
            <Ucs width="80" height="80" viewBox="0 0 80 80">
              <g fill="none" stroke="#c4c4c4">
                <path d="M8.500 64.500H14.500V70.500H8.500ZM11.500 64V34M15 67.500H47" />
                <path d="M8 33.500 11.500 24.500 15 33.500ZM10 32 11.500 28 13 32ZM47 64 55 67.500 47 71ZM49 66 53 67.500 49 69Z" />
              </g>
              <text x="9" y="18" fill="#b0b0b0">Y</text>
              <text x="62" y="72" fill="#b0b0b0">X</text>
            </Ucs>
          </Canvas>
          <SheetBar>
            {navPaths.map((d, i) => (
              <SheetNav key={d} type="button" aria-label={navNames[i]}>
                <svg width="8" height="8" viewBox="0 0 8 8">
                  <path d={d} fill="#000" stroke="#000" strokeWidth="0.800" />
                </svg>
              </SheetNav>
            ))}
            <SheetTab type="button" $active>模型</SheetTab>
            <SheetTab type="button">布局1</SheetTab>
            <SheetTab type="button">布局2</SheetTab>
          </SheetBar>
        </DrawingPane>

        <PaletteColumn $width={19} $gap={1}>
          <ToolPalette
            groups={[
              { tools: "named" },
              { tools: "vTop vBottom vLeft vRight vFront vBack", height: 97 },
              { tools: "sw se ne nw", height: 65 },
              { tools: "camera" },
              { tools: "orbit" },
            ]}
          />
          <ToolPalette groups={[{ tools: "vs2d" }, { tools: "vsWire vsHidden vsReal vsConcept", height: 64 }, { tools: "vsManage" }]} />
        </PaletteColumn>
        <PaletteColumn $width={19} $gap={0}>
          <ToolPalette
            groups={[
              {
                tools:
                  "erase mcopy mirror offset array move rotate scale stretch trim extend breakPt brk join chamfer fillet explode",
                height: 275,
              },
            ]}
          />
          <ToolPalette groups={[{ tools: "front back above under", height: 65 }]} />
        </PaletteColumn>
      </Workspace>

      <CommandPanel>
        <CommandHistory>
          <Han>指定下一点或</Han> [<Han>闭合</Han>(C)/<Han>放弃</Han>(U)]: *<Han>取消</Han>*
        </CommandHistory>
        <ScrollUp type="button" aria-label="向上滚动">
          <svg width="8" height="5" viewBox="0 0 8 5">
            <path d="M1 4 4 1 7 4" fill="none" stroke="#444" strokeWidth="1.500" />
          </svg>
        </ScrollUp>
      </CommandPanel>

      <Badge>
        <Ears width="32" height="9" viewBox="0 0 32 9">
          <path d="M0 9C0 -3 12 -3 13 9ZM16 9C17 -1 28 -1 29 9Z" fill="#b9b6b1" />
        </Ears>
        <svg width="36" height="38" viewBox="0 0 36 38" aria-hidden="true">
          <g fill="none" stroke="#d3d6de" strokeWidth="3" strokeLinejoin="round" strokeLinecap="round">
            <path d="M3 7V28C3 34 8 37 13 34L30 24C35 21 35 16 30 13L16 4C11 1 8 3 8 8V28" />
          </g>
          <path d="M14 14 21 18.500 14 23Z" fill="#d3d6de" />
          <path d="M24 15V22" stroke="#d3d6de" strokeWidth="1.500" />
        </svg>
        <BadgeText>
          <BadgeTitle>溜溜自学</BadgeTitle>
          <BadgeLink href="#zixue">zixue.3D66.COM</BadgeLink>
        </BadgeText>
      </Badge>
    </Shell>
  );
}
